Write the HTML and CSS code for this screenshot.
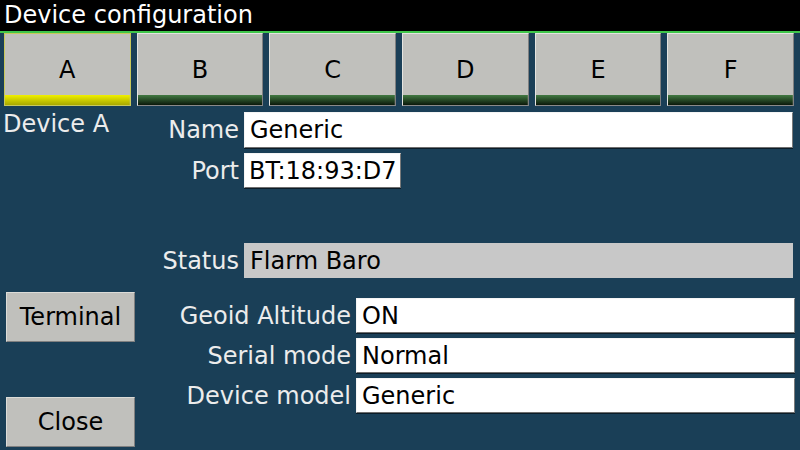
FILE: index.html
```html
<!DOCTYPE html>
<html>
<head>
<meta charset="utf-8">
<link rel="stylesheet" href="styles.css">
</head>
<body>
<div class="titlebar">Device configuration</div>
<div class="tabs">
  <div class="tab selected">A</div>
  <div class="tab">B</div>
  <div class="tab">C</div>
  <div class="tab">D</div>
  <div class="tab">E</div>
  <div class="tab">F</div>
</div>
<div class="main">
  <div class="side">
    <div class="device-label">Device A</div>
    <div class="button terminal">Terminal</div>
    <div class="button close">Close</div>
  </div>
  <div class="forms">
    <div class="group group-one">
      <div class="label">Name</div>
      <div class="field">Generic</div>
      <div class="label">Port</div>
      <div class="field port">BT:18:93:D7</div>
      <div class="spacer"></div>
      <div class="label">Status</div>
      <div class="field status">Flarm Baro</div>
    </div>
    <div class="group group-two">
      <div class="label">Geoid Altitude</div>
      <div class="field">ON</div>
      <div class="label">Serial mode</div>
      <div class="field">Normal</div>
      <div class="label">Device model</div>
      <div class="field">Generic</div>
    </div>
  </div>
</div>
</body>
</html>
```
FILE: styles.css
```css
html, body {
  margin: 0;
  padding: 0;
}
body {
  width: 800px;
  height: 450px;
  overflow: hidden;
  background: #1a3f57;
  font-family: "DejaVu Sans", sans-serif;
  font-size: 24px;
  color: #ececec;
}
.titlebar {
  height: 31px;
  line-height: 30px;
  background: #000;
  color: #fff;
  padding-left: 4px;
  border-bottom: 2px solid #3fc64a;
}
.tabs {
  display: grid;
  grid-template-columns: repeat(6, 1fr);
  column-gap: 6px;
  padding: 0 6px 0 4px;
  height: 73px;
}
.tab {
  box-sizing: border-box;
  display: flex;
  align-items: center;
  justify-content: center;
  color: #000;
  border: 1px solid;
  border-color: #e4e4e0 #808080 #8a8a8a #e4e4e0;
  background: linear-gradient(to bottom, #427a42, #0b180b) bottom / 100% 10px no-repeat, #c0c0bc;
}
.tab.selected {
  border-color: #c8c85a;
  background: linear-gradient(to bottom, #f0f000, #a8a800) bottom / 100% 10px no-repeat, #c0c0bc;
}
.main {
  display: flex;
  height: 344px;
}
.side {
  width: 136px;
  flex: none;
  display: flex;
  flex-direction: column;
}
.device-label {
  margin-top: 4px;
  padding-left: 3px;
  height: 28px;
  line-height: 28px;
}
.button {
  box-sizing: border-box;
  width: 129px;
  height: 50px;
  margin-left: 6px;
  display: flex;
  align-items: center;
  justify-content: center;
  color: #000;
  background: #c0c0bc;
  border: 1px solid;
  border-color: #dcdcd8 #808080 #808080 #dcdcd8;
}
.terminal {
  margin-top: 154px;
}
.close {
  margin-top: 55px;
}
.forms {
  flex: 1;
  display: flex;
  flex-direction: column;
}
.group {
  display: grid;
  column-gap: 5px;
  row-gap: 5px;
}
.group-one {
  margin-top: 6px;
  margin-right: 7px;
  grid-template-columns: 103px 1fr;
  grid-template-rows: 36px 35px 45px 35px;
}
.group-two {
  margin-top: 20px;
  margin-right: 5px;
  grid-template-columns: 215px 1fr;
  grid-auto-rows: 35px;
}
.spacer {
  grid-column: 1 / 3;
}
.label {
  display: flex;
  align-items: center;
  justify-content: flex-end;
  white-space: nowrap;
}
.field {
  box-sizing: border-box;
  display: flex;
  align-items: center;
  padding-left: 5px;
  background: #fff;
  color: #000;
  border: 1px solid;
  border-color: #f4f4f4 #7a7a7a #6e6e6e #f4f4f4;
  box-shadow: 0 1px 0 #0b1c28;
  white-space: nowrap;
}
.field.port {
  justify-self: start;
  width: 157px;
  padding-left: 4px;
}
.field.status {
  background: #c8c8c8;
  border-color: #c8c8c8;
  box-shadow: none;
}
```
